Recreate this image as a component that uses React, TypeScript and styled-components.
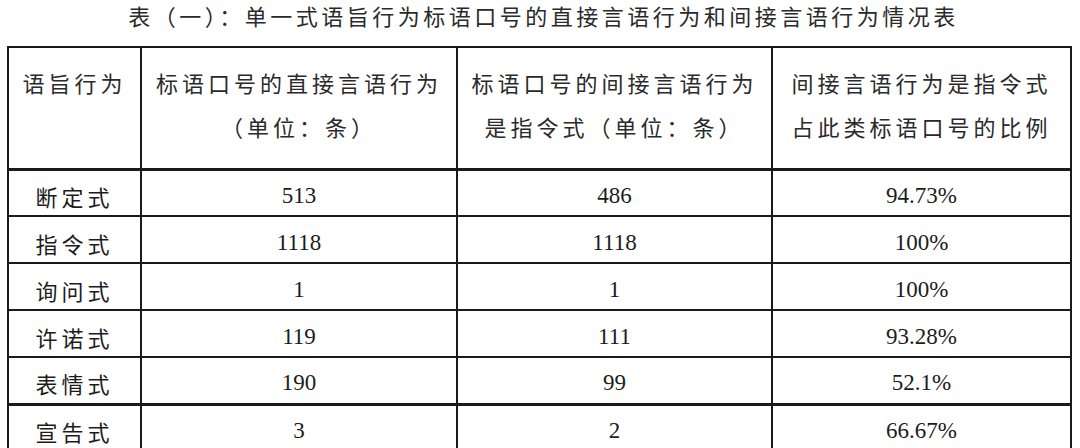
import React from 'react';
import styled, { createGlobalStyle } from 'styled-components';

const GlobalStyle = createGlobalStyle`
  html, body {
    margin: 0;
    padding: 0;
    background: #ffffff;
  }
  body {
    width: 1080px;
    height: 448px;
    overflow: hidden;
    color: #1c1c1c;
    font-family: 'Liberation Serif', 'Noto Sans CJK SC', serif;
  }
`;

const CJK = `'Noto Sans CJK SC', 'Noto Sans CJK TC', sans-serif`;
const NUM = `'Liberation Serif', 'Noto Sans CJK SC', serif`;
const LINE = '#1a1a1a';

const Page = styled.div`
  display: flex;
  flex-direction: column;
  align-items: flex-start;
  padding: 0 0 0 7px;
`;

const Caption = styled.h1`
  align-self: stretch;
  margin: 0;
  padding: 0;
  height: 46px;
  box-sizing: border-box;
  text-align: center;
  font-family: ${CJK};
  font-weight: 400;
  font-size: 22px;
  line-height: 30px;
  letter-spacing: 3.5px;
  color: #2a2a2a;
`;

const Table = styled.table`
  border-collapse: collapse;
  table-layout: fixed;
  width: 1063px;
  border: 2px solid ${LINE};
`;

const HeadCell = styled.th`
  height: 122px;
  box-sizing: border-box;
  padding: 12px 0 0 0;
  vertical-align: top;
  border: 2px solid ${LINE};
  border-bottom-width: 3px;
  font-family: ${CJK};
  font-weight: 400;
  font-size: 22px;
  line-height: 44px;
  letter-spacing: 4px;
  text-align: center;
  color: #2a2a2a;
`;

const Row = styled.tr<{ $heavy?: boolean }>`
  td {
    border-top-width: ${(p) => (p.$heavy ? '3px' : '2px')};
  }
`;

const Cell = styled.td<{ $label?: boolean }>`
  height: 47px;
  box-sizing: border-box;
  padding: 6px 0 0 0;
  border: 2px solid ${LINE};
  text-align: center;
  vertical-align: middle;
  font-family: ${(p) => (p.$label ? CJK : NUM)};
  font-size: ${(p) => (p.$label ? '22px' : '23px')};
  letter-spacing: ${(p) => (p.$label ? '4px' : '0')};
  line-height: 30px;
  color: #1c1c1c;
`;

const rows = [
  ['断定式', '513', '486', '94.73%'],
  ['指令式', '1118', '1118', '100%'],
  ['询问式', '1', '1', '100%'],
  ['许诺式', '119', '111', '93.28%'],
  ['表情式', '190', '99', '52.1%'],
  ['宣告式', '3', '2', '66.67%'],
];

const App: React.FC = () => (
  <Page>
    <GlobalStyle />
    <Caption>表（一）：单一式语旨行为标语口号的直接言语行为和间接言语行为情况表</Caption>
    <Table>
      <colgroup>
        <col style={{ width: 133 }} />
        <col style={{ width: 316 }} />
        <col style={{ width: 315 }} />
        <col style={{ width: 299 }} />
      </colgroup>
      <thead>
        <tr>
          <HeadCell>语旨行为</HeadCell>
          <HeadCell>
            标语口号的直接言语行为
            <br />
            （单位：条）
          </HeadCell>
          <HeadCell>
            标语口号的间接言语行为
            <br />
            是指令式（单位：条）
          </HeadCell>
          <HeadCell>
            间接言语行为是指令式
            <br />
            占此类标语口号的比例
          </HeadCell>
        </tr>
      </thead>
      <tbody>
        {rows.map((r, i) => (
          <Row key={r[0]} $heavy={i === rows.length - 1}>
            <Cell $label>{r[0]}</Cell>
            <Cell>{r[1]}</Cell>
            <Cell>{r[2]}</Cell>
            <Cell>{r[3]}</Cell>
          </Row>
        ))}
      </tbody>
    </Table>
  </Page>
);

export default App;
